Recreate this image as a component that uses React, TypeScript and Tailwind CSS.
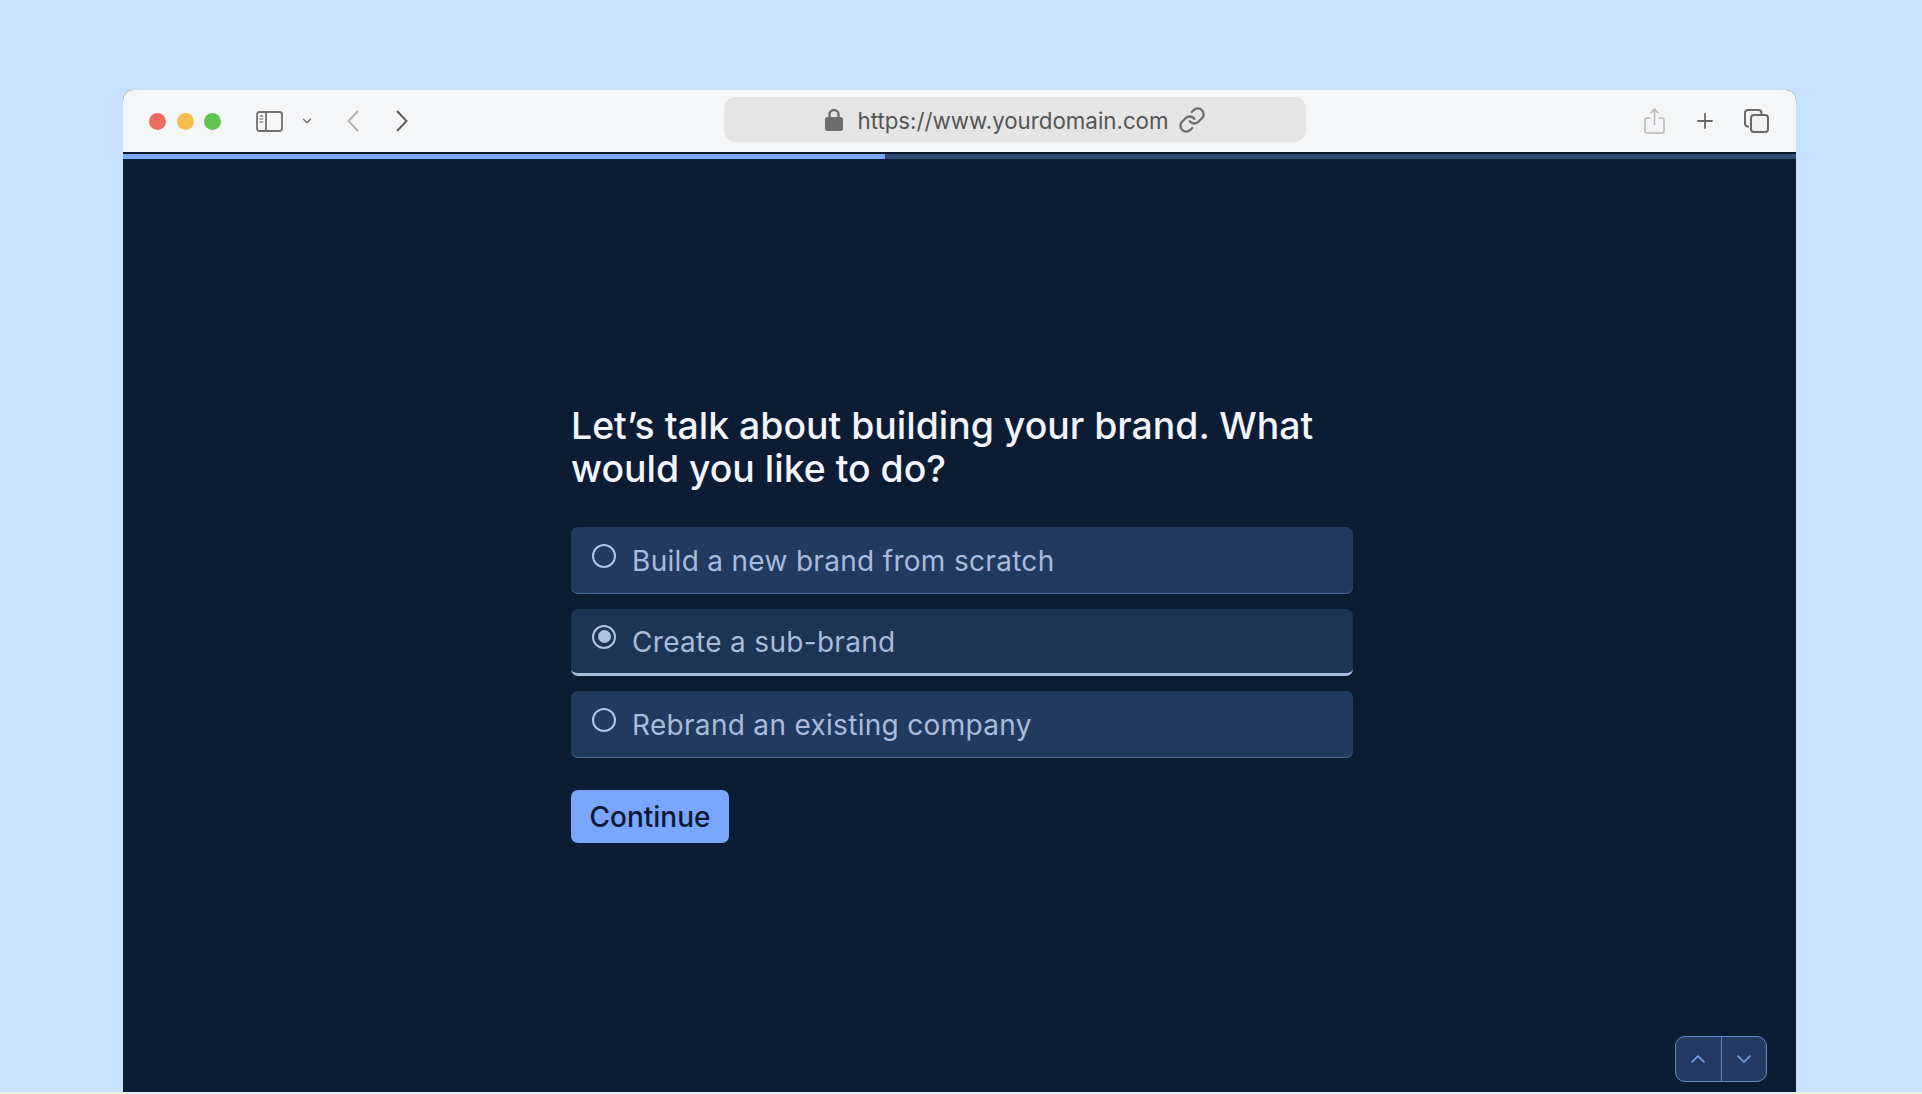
import { ChevronDown, ChevronUp, Link, Plus } from 'lucide-react';

const options = [
  { label: 'Build a new brand from scratch', selected: false },
  { label: 'Create a sub-brand', selected: true },
  { label: 'Rebrand an existing company', selected: false },
];

function BrowserBar() {
  return (
    <header className="relative flex h-[64px] items-center rounded-t-[10px] border-b-2 border-[#0a1728] bg-[#f5f6f8] pl-[26px]">
      {/* Traffic lights */}
      <div className="flex shrink-0 gap-[10.5px]">
        <span className="h-[17px] w-[17px] rounded-full bg-[#ee6a5f]" />
        <span className="h-[17px] w-[17px] rounded-full bg-[#f5bd4f]" />
        <span className="h-[17px] w-[17px] rounded-full bg-[#61c454]" />
      </div>

      {/* Sidebar toggle */}
      <svg className="ml-[35px] h-[21px] w-[27px] shrink-0" viewBox="0 0 27 21" fill="none">
        <rect x="1" y="1" width="25" height="19" rx="2.5" stroke="#707070" strokeWidth="1.8" />
        <path d="M10 1v19" stroke="#707070" strokeWidth="1.8" />
        <path d="M3.6 5h3.6M3.6 8h3.6M3.6 11h3.6" stroke="#8a8a8a" strokeWidth="1.4" />
      </svg>
      <ChevronDown className="ml-[17px] h-[14px] w-[14px] shrink-0 text-[#707070]" strokeWidth={2.4} />
      <svg className="ml-[33px] h-[22px] w-[12px] shrink-0" viewBox="0 0 12 22" fill="none" stroke="#b4b4b4" strokeWidth="2">
        <path d="M11 1 1.5 11 11 21" />
      </svg>
      <svg className="ml-[37px] h-[22px] w-[12px] shrink-0" viewBox="0 0 12 22" fill="none" stroke="#5f5f5f" strokeWidth="2">
        <path d="M1 1l9.5 10L1 21" />
      </svg>

      {/* Address bar */}
      <div className="-mt-[3px] ml-[316px] flex h-[45px] w-[582px] shrink-0 items-center justify-center rounded-[12px] bg-[#e5e5e5]">
        <svg className="h-[23px] w-[20px]" viewBox="0 0 20 23" fill="none">
          <path d="M5.5 10V6.5a4.5 4.5 0 0 1 9 0V10" stroke="#6e6e6e" strokeWidth="2.4" />
          <rect x="1" y="9" width="18" height="14" rx="2.5" fill="#6e6e6e" />
        </svg>
        <span className="ml-[13px] mt-[4px] font-['Inter',sans-serif] text-[22.3px] leading-none text-[#555555]">https://www.yourdomain.com</span>
        <Link className="ml-[9px] h-[28px] w-[28px] text-[#6e6e6e]" strokeWidth={2} />
      </div>

      {/* Right side actions */}
      <div className="ml-auto mr-[27px] flex items-center">
        <svg className="h-[26px] w-[21px]" viewBox="0 0 21 26" fill="none" stroke="#b9b9b9" strokeWidth="1.6">
          <path d="M6.5 10H3a2 2 0 0 0-2 2v11a2 2 0 0 0 2 2h15a2 2 0 0 0 2-2V12a2 2 0 0 0-2-2h-3.5" />
          <path d="M10.5 17V1.5M6.5 5.2l4-4 4 4" />
        </svg>
        <Plus className="ml-[28px] h-[24px] w-[24px] text-[#696969]" strokeWidth={1.8} />
        <svg className="ml-[27px] h-[24px] w-[25px]" viewBox="0 0 25 24" fill="none" stroke="#696969" strokeWidth="2">
          <path d="M5 17.5H4a3 3 0 0 1-3-3V4a3 3 0 0 1 3-3h10.5a3 3 0 0 1 3 3v1" />
          <rect x="7" y="6" width="17" height="17" rx="3" fill="#f1f1f1" />
        </svg>
      </div>
    </header>
  );
}

export default function App() {
  return (
    <div className="flex h-[1094px] flex-col overflow-hidden bg-[#c8e1ff]">
      <div className="flex min-h-0 flex-1 flex-col pl-[123px] pr-[126px] pt-[90px]">
        <div className="relative flex flex-1 flex-col rounded-t-[10px] bg-[#0b1c33]">
          <BrowserBar />
          {/* Progress */}
          <div className="h-[5px] bg-[#2e4a72]">
            <div className="h-full w-[762px] bg-[#79a6ff]" />
          </div>

          <main className="pl-[448px] pt-[245px]">
            <h1 className="w-[782px] font-['Inter',sans-serif] text-[37.4px] font-medium leading-[43px] text-[#f1f5fd]">
              Let’s talk about building your brand. What would you like to do?
            </h1>
            <div className="mt-[37px] flex w-[782px] flex-col gap-[15px]">
              {options.map((option) => (
                <div
                  key={option.label}
                  className={`flex h-[67px] items-center gap-[16px] rounded-[7px] pl-[21px] ${
                    option.selected
                      ? 'border-b-[3px] border-[#a9bbdd] bg-[#1e3454]'
                      : 'border-b-[1.5px] border-[#4d6a96] bg-[#223a5e]'
                  }`}
                >
                  <span className="-mt-[9px] flex h-[24px] w-[24px] items-center justify-center rounded-full border-2 border-[#b0c1e2]">
                    {option.selected && <span className="h-[13px] w-[13px] rounded-full bg-[#b0c1e2]" />}
                  </span>
                  <span className="mt-[1px] font-['Inter',sans-serif] text-[28px] leading-none tracking-[0.011em] text-[#a9bbdd]">{option.label}</span>
                </div>
              ))}
            </div>
            <button className="mt-[32px] h-[53px] w-[158px] rounded-[7px] bg-[#79a6ff] font-['Inter',sans-serif] text-[28px] font-medium leading-none text-[#0c1b33]">
              Continue
            </button>
          </main>

          {/* Up/down question nav */}
          <div className="absolute bottom-[10px] right-[29px] flex h-[46px] w-[92px] overflow-hidden rounded-[10px] border-[1.5px] border-[#5f88c8] bg-[#253a63] text-[#7ba4ec]">
            <div className="flex flex-1 items-center justify-center border-r-[1.5px] border-[#5f88c8]">
              <ChevronUp className="h-[24px] w-[24px]" strokeWidth={1.6} />
            </div>
            <div className="flex flex-1 items-center justify-center">
              <ChevronDown className="h-[24px] w-[24px]" strokeWidth={1.6} />
            </div>
          </div>
        </div>
      </div>
      <div className="h-[2px] bg-[#ececec]" />
    </div>
  );
}
